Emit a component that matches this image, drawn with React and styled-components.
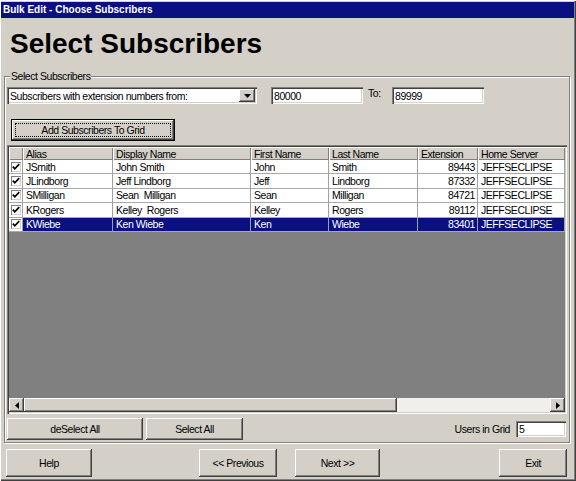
import React from 'react';
import styled, { createGlobalStyle } from 'styled-components';

const FACE = '#d4d0c8';
const NAVY = '#0a1080';

const Global = createGlobalStyle`
  html, body { margin: 0; padding: 0; background: ${FACE}; }
  body { font-family: "Liberation Sans", Arial, sans-serif; }
`;

const Window = styled.div`
  width: 576px;
  height: 481px;
  box-sizing: border-box;
  background: ${FACE};
  box-shadow: inset 1px 1px #ffffff, inset -1px -1px #404040, inset -2px -2px #808080;
  display: flex;
  flex-direction: column;
  overflow: hidden;
  font-size: 10.5px;
  letter-spacing: -0.45px;
  color: #000;
`;

const TitleBar = styled.div`
  margin: 2px 2px 0 1px;
  height: 16px;
  background: ${NAVY};
  color: #fff;
  font-weight: bold;
  font-size: 10px;
  letter-spacing: 0;
  line-height: 16px;
  padding-left: 2px;
`;

const Heading = styled.h1`
  margin: 10px 0 0 10px;
  font-size: 28px;
  line-height: 32px;
  font-weight: bold;
  letter-spacing: 0;
`;

const Group = styled.section`
  margin: 16px 0 0 4px;
  width: 566px;
  box-sizing: border-box;
  border: 1px solid #808080;
  box-shadow: inset 1px 1px #ffffff, 1px 1px #ffffff;
  display: flex;
  flex-direction: column;
  padding: 0 3px 2px 1px;
`;

const Legend = styled.div`
  align-self: flex-start;
  margin: -7px 0 0 4px;
  padding: 0 1px;
  background: ${FACE};
  line-height: 13px;
`;

const FilterRow = styled.div`
  display: flex;
  align-items: center;
  margin-top: 4px;
`;

const Field = styled.div`
  box-sizing: border-box;
  height: ${p => p.$h || 17}px;
  width: ${p => p.$w}px;
  margin-left: ${p => p.$ml || 0}px;
  background: #fff;
  box-shadow: inset 1px 1px #808080, inset 2px 2px #404040, inset -1px -1px #ffffff, inset -2px -2px ${FACE};
  display: flex;
  align-items: center;
  padding: 0 2px 0 3px;
  white-space: pre;
`;

const FieldText = styled.span`
  flex: 1;
  overflow: hidden;
`;

const raised = `
  background: ${FACE};
  box-shadow: inset -1px -1px #404040, inset 1px 1px #ffffff, inset -2px -2px #808080;
`;

const DropButton = styled.div`
  ${raised}
  width: 16px;
  height: 13px;
  display: flex;
  align-items: center;
  justify-content: center;
`;

const ToLabel = styled.span`
  align-self: flex-start;
  width: 24px;
  line-height: 12px;
  margin-left: 5px;
`;

const Button = styled.button`
  box-sizing: border-box;
  width: ${p => p.$w}px;
  height: ${p => p.$h || 22}px;
  margin: 0;
  margin-left: ${p => p.$ml || 0}px;
  padding: 0;
  border: none;
  font: inherit;
  letter-spacing: inherit;
  color: #000;
  ${raised}
  display: flex;
  align-items: center;
  justify-content: center;
`;

const DefaultButton = styled(Button)`
  border: 1px solid #000;
  outline: 1px dotted #000;
  outline-offset: -5px;
  margin-top: 15px;
  margin-left: 5px;
`;

const Grid = styled.div`
  margin: 4px 0 0 1px;
  width: 560px;
  height: 269px;
  box-sizing: border-box;
  padding: 2px;
  background: #808080;
  box-shadow: inset 1px 1px #808080, inset 2px 2px #404040, inset -1px -1px #ffffff, inset -2px -2px ${FACE};
  display: flex;
  flex-direction: column;
`;

const COLS = '14px 90px 138px 78px 89px 60px 87px';

const GridRow = styled.div`
  display: grid;
  grid-template-columns: ${COLS};
  height: ${p => p.$h}px;
`;

const HeadCell = styled.div`
  box-sizing: border-box;
  background: ${FACE};
  box-shadow: inset 1px 1px #ffffff, inset -1px -1px #808080;
  padding: 0 3px;
  display: flex;
  align-items: center;
  white-space: pre;
  overflow: hidden;
`;

const Cell = styled.div`
  box-sizing: border-box;
  border-right: 1px solid #a0a0a0;
  border-bottom: 1px solid #a8a8a8;
  padding: 0 2px 0 3px;
  display: flex;
  align-items: center;
  justify-content: ${p => (p.$right ? 'flex-end' : 'flex-start')};
  white-space: pre;
  overflow: hidden;
  background: ${p => (p.$sel ? NAVY : '#fff')};
  color: ${p => (p.$sel ? '#fff' : '#000')};
`;

const CheckCell = styled(Cell)`
  justify-content: center;
  padding: 0;
  background: #fff;
`;

const CheckBox = styled.span`
  box-sizing: border-box;
  width: 10px;
  height: 10px;
  background: #fff;
  box-shadow: inset 1px 1px #808080, inset -1px -1px #d4d0c8;
  display: flex;
  align-items: center;
  justify-content: center;
`;

const Filler = styled.div`
  flex: 1;
  background: #808080;
`;

const HScroll = styled.div`
  height: 14px;
  display: flex;
`;

const ScrollButton = styled.div`
  ${raised}
  width: 15px;
  display: flex;
  align-items: center;
  justify-content: center;
`;

const Thumb = styled.div`
  ${raised}
  width: ${p => p.$w}px;
`;

const Track = styled.div`
  flex: 1;
  background-color: #f1efeb;
`;

const BottomRow = styled.div`
  display: flex;
  align-items: center;
  margin: 4px 0 0 1px;
`;

const Spacer = styled.div`
  flex: 1;
`;

const UsersLabel = styled.span`
  margin-right: 6px;
`;

const Footer = styled.div`
  display: flex;
  margin-top: 6px;
  padding: 0 9px 0 6px;
`;

const Check = () => (
  <svg width="8" height="8" viewBox="0 0 8 8">
    <polyline points="0.8,3.6 2.8,5.8 7.2,1.2" fill="none" stroke="#000" strokeWidth="1.7" />
  </svg>
);

const Arrow = ({ dir }) => {
  const pts = {
    down: '0,0 7,0 3.5,4',
    left: '4,0 4,7 0,3.5',
    right: '0,0 0,7 4,3.5',
  }[dir];
  const size = dir === 'down' ? [7, 4] : [4, 7];
  return (
    <svg width={size[0]} height={size[1]} viewBox={`0 0 ${size[0]} ${size[1]}`}>
      <polygon points={pts} fill="#000" />
    </svg>
  );
};

const columns = [
  { key: 'alias', label: 'Alias' },
  { key: 'display', label: 'Display Name' },
  { key: 'first', label: 'First Name' },
  { key: 'last', label: 'Last Name' },
  { key: 'ext', label: 'Extension', right: true },
  { key: 'server', label: 'Home Server' },
];

const rows = [
  { alias: 'JSmith', display: 'John Smith', first: 'John', last: 'Smith', ext: '89443', server: 'JEFFSECLIPSE' },
  { alias: 'JLindborg', display: 'Jeff Lindborg', first: 'Jeff', last: 'Lindborg', ext: '87332', server: 'JEFFSECLIPSE' },
  { alias: 'SMilligan', display: 'Sean  Milligan', first: 'Sean', last: 'Milligan', ext: '84721', server: 'JEFFSECLIPSE' },
  { alias: 'KRogers', display: 'Kelley  Rogers', first: 'Kelley', last: 'Rogers', ext: '89112', server: 'JEFFSECLIPSE' },
  { alias: 'KWiebe', display: 'Ken Wiebe', first: 'Ken', last: 'Wiebe', ext: '83401', server: 'JEFFSECLIPSE', selected: true },
];

export default function App() {
  return (
    <>
      <Global />
      <Window>
        <TitleBar>Bulk Edit - Choose Subscribers</TitleBar>
        <Heading>Select Subscribers</Heading>
        <Group>
          <Legend>Select Subscribers</Legend>
          <FilterRow>
            <Field $w={250} $ml={1}>
              <FieldText>Subscribers with extension numbers from:</FieldText>
              <DropButton>
                <Arrow dir="down" />
              </DropButton>
            </Field>
            <Field $w={92} $ml={14}>
              <FieldText>80000</FieldText>
            </Field>
            <ToLabel>To:</ToLabel>
            <Field $w={92}>
              <FieldText>89999</FieldText>
            </Field>
          </FilterRow>
          <DefaultButton $w={164}>Add Subscribers To Grid</DefaultButton>
          <Grid>
            <GridRow $h={13}>
              <HeadCell />
              {columns.map(c => (
                <HeadCell key={c.key}>{c.label}</HeadCell>
              ))}
            </GridRow>
            {rows.map(r => (
              <GridRow key={r.alias} $h={14.4}>
                <CheckCell>
                  <CheckBox>
                    <Check />
                  </CheckBox>
                </CheckCell>
                {columns.map(c => (
                  <Cell key={c.key} $right={c.right} $sel={r.selected}>
                    {r[c.key]}
                  </Cell>
                ))}
              </GridRow>
            ))}
            <Filler />
            <HScroll>
              <ScrollButton>
                <Arrow dir="left" />
              </ScrollButton>
              <Thumb $w={373} />
              <Track />
              <ScrollButton>
                <Arrow dir="right" />
              </ScrollButton>
            </HScroll>
          </Grid>
          <BottomRow>
            <Button $w={136}>deSelect All</Button>
            <Button $w={97} $ml={3}>Select All</Button>
            <Spacer />
            <UsersLabel>Users in Grid</UsersLabel>
            <Field $w={50} $h={16}>
              <FieldText>5</FieldText>
            </Field>
          </BottomRow>
        </Group>
        <Footer>
          <Button $w={86} $h={28}>Help</Button>
          <Button $w={78} $h={28} $ml={107}>&lt;&lt; Previous</Button>
          <Button $w={85} $h={28} $ml={18}>Next &gt;&gt;</Button>
          <Spacer />
          <Button $w={68} $h={28}>Exit</Button>
        </Footer>
      </Window>
    </>
  );
}
